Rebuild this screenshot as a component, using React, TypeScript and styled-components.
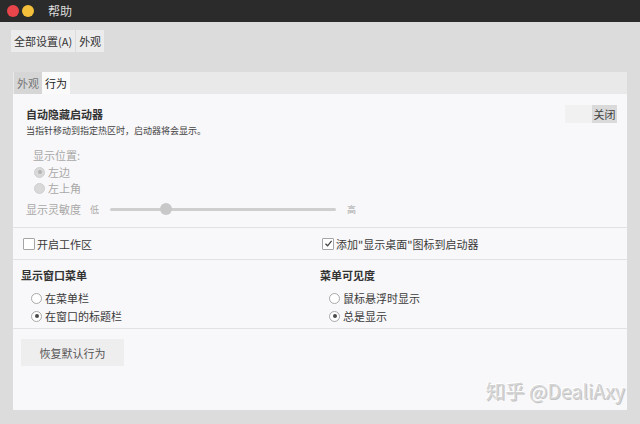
import React from "react";
import styled, { createGlobalStyle } from "styled-components";

const Global = createGlobalStyle`
  html, body { margin: 0; padding: 0; background: #dcdcdc; }
  body { font-family: "Noto Sans CJK SC", "Noto Sans", sans-serif; color: #3a3a3a; }
`;

const Window = styled.div`
  position: relative;
  width: 640px;
  height: 424px;
  display: flex;
  flex-direction: column;
  background: #dcdcdc;
  overflow: hidden;
`;

const TitleBar = styled.div`
  height: 22px;
  flex: none;
  background: #2b2b2b;
  display: flex;
  align-items: center;
  padding-left: 7px;
  gap: 3px;
`;

const Dot = styled.span<{ $c: string }>`
  width: 12px;
  height: 12px;
  border-radius: 50%;
  background: ${(p) => p.$c};
`;

const Title = styled.span`
  margin-left: 11px;
  font-size: 12px;
  color: #dcdcdc;
  line-height: 22px;
`;

const Crumbs = styled.div`
  display: flex;
  gap: 1px;
  padding: 8px 11px 0;
  height: 22px;
`;

const Crumb = styled.div`
  height: 22px;
  padding: 0 3px;
  display: flex;
  align-items: center;
  background: #ececec;
  font-size: 11px;
  color: #333;
`;

const Notebook = styled.div`
  margin: 20px 13px 0;
  height: 338px;
  display: flex;
  flex-direction: column;
`;

const TabStrip = styled.div`
  height: 22px;
  flex: none;
  display: flex;
  background: #e9e9e9;
  padding-left: 1px;
`;

const Tab = styled.div<{ $active?: boolean }>`
  height: 22px;
  padding: 0 3px;
  display: flex;
  align-items: center;
  font-size: 11px;
  color: ${(p) => (p.$active ? "#222" : "#777")};
  background: ${(p) => (p.$active ? "#fafafa" : "#d6d6d6")};
`;

const Panel = styled.div`
  flex: 1;
  background: #f8f7f9;
  display: flex;
  flex-direction: column;
`;

const Section = styled.div<{ $h: number; $pad?: string }>`
  height: ${(p) => p.$h}px;
  padding: ${(p) => p.$pad || "0"};
  box-sizing: border-box;
  border-bottom: 1px solid #e2e2e4;
  display: flex;
  flex-direction: column;
`;

const HeaderRow = styled.div`
  display: flex;
  justify-content: space-between;
  align-items: flex-start;
  padding-right: 10px;
`;

const Bold = styled.div`
  font-size: 11px;
  font-weight: 700;
  line-height: 16px;
  color: #333;
`;

const Sub = styled.div`
  margin-top: 2px;
  font-size: 9px;
  line-height: 14px;
  color: #444;
`;

const Toggle = styled.div`
  margin-top: -1px;
  width: 52px;
  height: 18px;
  display: flex;
  background: #f1f1f1;
  justify-content: flex-end;
`;

const ToggleOff = styled.div`
  width: 25px;
  display: flex;
  align-items: center;
  justify-content: center;
  background: #dadada;
  font-size: 11px;
  color: #444;
`;

const GreyLabel = styled.div`
  margin-top: 8px;
  font-size: 11px;
  line-height: 18px;
  color: #a8a8a8;
  padding-left: 7px;
`;

const OptionRow = styled.div<{ $indent: number; $h?: number; $muted?: boolean }>`
  display: flex;
  align-items: center;
  height: ${(p) => p.$h || 16}px;
  padding-left: ${(p) => p.$indent}px;
  gap: 3px;
  font-size: 11px;
  color: ${(p) => (p.$muted ? "#a8a8a8" : "#3a3a3a")};
`;

const Radio = styled.span<{ $on?: boolean; $disabled?: boolean }>`
  width: 11px;
  height: 11px;
  box-sizing: border-box;
  border-radius: 50%;
  border: 1px solid ${(p) => (p.$disabled ? "#cfcfcf" : "#a9a9a9")};
  background: ${(p) => (p.$disabled ? "#d9d9d9" : "#fff")};
  display: flex;
  align-items: center;
  justify-content: center;
  &::after {
    content: "";
    display: ${(p) => (p.$on ? "block" : "none")};
    width: 4px;
    height: 4px;
    border-radius: 50%;
    background: ${(p) => (p.$disabled ? "#b4b4b4" : "#4a4a4a")};
  }
`;

const SliderRow = styled.div`
  display: flex;
  align-items: center;
  height: 16px;
  margin-top: 5px;
  font-size: 11px;
  color: #a8a8a8;
`;

const Small = styled.span<{ $ml: number }>`
  font-size: 9px;
  color: #a8a8a8;
  margin-left: ${(p) => p.$ml}px;
`;

const Track = styled.div`
  position: relative;
  margin-left: 11px;
  width: 226px;
  height: 3px;
  border-radius: 2px;
  background: #cfcfcf;
`;

const Knob = styled.span`
  position: absolute;
  top: -5px;
  width: 12px;
  height: 12px;
  border-radius: 50%;
  background: #c8c8c8;
`;

const Columns = styled.div`
  display: grid;
  grid-template-columns: 299px 1fr;
  height: 100%;
`;

const Col = styled.div<{ $pad: string }>`
  padding: ${(p) => p.$pad};
  display: flex;
  flex-direction: column;
`;

const Spacer = styled.div`
  height: 6px;
`;

const CheckRow = styled.div`
  display: flex;
  align-items: center;
  height: 100%;
  gap: 2px;
  font-size: 11px;
  color: #3a3a3a;
`;

const Check = styled.span`
  width: 12px;
  height: 12px;
  box-sizing: border-box;
  border: 1px solid #a5a5a5;
  background: #fff;
  border-radius: 1px;
  display: flex;
  align-items: center;
  justify-content: center;
`;

const Button = styled.div`
  width: 103px;
  height: 27px;
  background: #efeeef;
  display: flex;
  align-items: center;
  justify-content: center;
  font-size: 11px;
  color: #555;
  margin: 10px 0 0 8px;
`;

const Watermark = styled.div`
  position: absolute;
  right: 15px;
  top: 376px;
  font-family: "Noto Sans CJK SC", "Noto Sans", sans-serif;
  font-size: 19.5px;
  color: #d4d4d4;
  text-shadow: -1px -1px 0 #ffffff, 1px 1px 0 #c4c4c4;
`;

export default function App() {
  return (
    <Window>
      <Global />
      <TitleBar>
        <Dot $c="#e8464b" />
        <Dot $c="#f4bf3b" />
        <Title>帮助</Title>
      </TitleBar>
      <Crumbs>
        <Crumb>全部设置(A)</Crumb>
        <Crumb>外观</Crumb>
      </Crumbs>
      <Notebook>
        <TabStrip>
          <Tab>外观</Tab>
          <Tab $active>行为</Tab>
        </TabStrip>
        <Panel>
          <Section $h={134} $pad="12px 0 0 13px">
            <HeaderRow>
              <div>
                <Bold>自动隐藏启动器</Bold>
                <Sub>当指针移动到指定热区时，启动器将会显示。</Sub>
              </div>
              <Toggle>
                <ToggleOff>关闭</ToggleOff>
              </Toggle>
            </HeaderRow>
            <GreyLabel>显示位置:</GreyLabel>
            <OptionRow $indent={8} $muted>
              <Radio $on $disabled />
              左边
            </OptionRow>
            <OptionRow $indent={8} $muted>
              <Radio $disabled />
              左上角
            </OptionRow>
            <SliderRow>
              显示灵敏度
              <Small $ml={9}>低</Small>
              <Track>
                <Knob style={{ left: `${(50 / 226) * 100}%` }} />
              </Track>
              <Small $ml={11}>高</Small>
            </SliderRow>
          </Section>
          <Section $h={32}>
            <Columns>
              <Col $pad="0 0 0 10px">
                <CheckRow>
                  <Check />
                  开启工作区
                </CheckRow>
              </Col>
              <Col $pad="0 0 0 10px">
                <CheckRow>
                  <Check>
                    <svg width="9" height="9" viewBox="0 0 9 9">
                      <path d="M1.5 4.8 L3.6 6.8 L7.6 1.8" fill="none" stroke="#444" strokeWidth="1.3" />
                    </svg>
                  </Check>
                  添加"显示桌面"图标到启动器
                </CheckRow>
              </Col>
            </Columns>
          </Section>
          <Section $h={69}>
            <Columns>
              <Col $pad="7px 0 0 8px">
                <Bold>显示窗口菜单</Bold>
                <Spacer />
                <OptionRow $indent={10} $h={18}>
                  <Radio />
                  在菜单栏
                </OptionRow>
                <OptionRow $indent={10} $h={18}>
                  <Radio $on />
                  在窗口的标题栏
                </OptionRow>
              </Col>
              <Col $pad="7px 0 0 8px">
                <Bold>菜单可见度</Bold>
                <Spacer />
                <OptionRow $indent={9} $h={18}>
                  <Radio />
                  鼠标悬浮时显示
                </OptionRow>
                <OptionRow $indent={9} $h={18}>
                  <Radio $on />
                  总是显示
                </OptionRow>
              </Col>
            </Columns>
          </Section>
          <Button>恢复默认行为</Button>
        </Panel>
      </Notebook>
      <Watermark>知乎 @DealiAxy</Watermark>
    </Window>
  );
}
